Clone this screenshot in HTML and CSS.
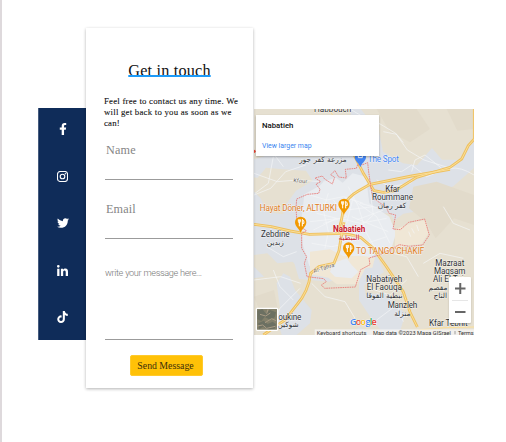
FILE: index.html
```html
<!DOCTYPE html>
<html lang="en">
<head>
<meta charset="utf-8">
<title>Get in touch</title>
<link rel="stylesheet" href="styles.css">
</head>
<body>
<main class="contact">
  <nav class="social">
    <a class="social-link" aria-label="Facebook"><svg width="8" height="12" viewBox="0 0 320 512"><path d="M279.14 288l14.22-92.66h-88.91v-60.13c0-25.35 12.42-50.06 52.24-50.06h40.42V6.26S260.43 0 225.36 0c-73.22 0-121.08 44.38-121.08 124.72v70.62H22.89V288h81.39v224h100.17V288z"/></svg></a>
    <a class="social-link" aria-label="Instagram"><svg width="11" height="11" viewBox="0 0 22 22"><rect class="outline" x="1" y="1" width="20" height="20" rx="5.5"/><circle class="outline" cx="11" cy="11" r="4.6"/><circle cx="16.7" cy="5.4" r="1.4"/></svg></a>
    <a class="social-link" aria-label="Twitter"><svg width="12" height="12" viewBox="0 0 512 512"><path d="M459.37 151.716c.325 4.548.325 9.097.325 13.645 0 138.72-105.583 298.558-298.558 298.558-59.452 0-114.68-17.219-161.137-47.106 8.447.974 16.568 1.299 25.34 1.299 49.055 0 94.213-16.568 130.274-44.832-46.132-.975-84.792-31.188-98.112-72.772 6.498.974 12.995 1.624 19.818 1.624 9.421 0 18.843-1.3 27.614-3.573-48.081-9.747-84.143-51.98-84.143-102.985v-1.299c13.969 7.797 30.214 12.67 47.431 13.319-28.264-18.843-46.781-51.005-46.781-87.391 0-19.492 5.197-37.36 14.294-52.954 51.655 63.675 129.3 105.258 216.365 109.807-1.624-7.797-2.599-15.918-2.599-24.04 0-57.828 46.782-104.934 104.934-104.934 30.213 0 57.502 12.67 76.67 33.137 23.715-4.548 46.456-13.32 66.599-25.34-7.798 24.366-24.366 44.833-46.132 57.827 21.117-2.273 41.584-8.122 60.426-16.243-14.292 20.791-32.161 39.308-52.628 54.253z"/></svg></a>
    <a class="social-link" aria-label="LinkedIn"><svg width="11" height="11" viewBox="0 0 448 448"><path d="M100.28 448H7.4V148.9h92.88zM53.79 108.1C24.09 108.1 0 83.5 0 53.8a53.79 53.79 0 0 1 107.58 0c0 29.7-24.1 54.3-53.79 54.3zM447.9 448h-92.68V302.4c0-34.7-.7-79.2-48.29-79.2-48.29 0-55.69 37.7-55.69 76.7V448h-92.78V148.9h89.08v40.8h1.3c12.4-23.5 42.69-48.3 87.88-48.3 94 0 111.28 61.9 111.28 142.3V448z"/></svg></a>
    <a class="social-link" aria-label="TikTok"><svg width="11" height="12" viewBox="0 0 448 512"><path d="M448,209.91a210.06,210.06,0,0,1-122.77-39.25V349.38A162.55,162.55,0,1,1,185,188.31V278.2a74.62,74.62,0,1,0,52.23,71.18V0l88,0a121.18,121.18,0,0,0,1.86,22.17h0A122.18,122.18,0,0,0,381,102.39a121.43,121.43,0,0,0,67,20.14Z"/></svg></a>
  </nav>

  <form class="card">
    <h1 class="title">Get in touch</h1>
    <p class="intro">Feel free to contact us any time. We<br>will get back to you as soon as we<br>can!</p>
    <div class="field">Name</div>
    <div class="field field-email">Email</div>
    <div class="field field-message">write your message here...</div>
    <button class="send" type="button">Send Message</button>
  </form>

  <section class="map">
    <svg class="map-canvas" width="220" height="226" viewBox="762 327 660 678">
      <defs>
        <g id="pin"><path d="M0 29C-3 17-17 10-17-3a17 17 0 0 1 34 0C17 10 3 17 0 29z"/><path class="cutlery" d="M-7-12v6q0 4 3 4t3-4v-6M-4-12V9M5 9V-12q6 3 5 12H5"/></g>
      </defs>
      <rect class="land" x="762" y="327" width="660" height="678"/>
      <path class="urban" d="M762 478l45-14 95 8 100-4 50-90v-51h30l55 68 12 60 60 35 42 6 45-52 30 35h55l15-35 26-20v80l-62 55-50 22-40 50-60 10-40 30-30 0-8 100 20 45-60 40 4 25 60 0 60 60-18 60 18 45 43 20-15 29h-35l-42-75-50-60-40-60 0-60-40-10-50 15-90-8-15-50-20-20-8-100-6-40 40-55 50-30-20-30-70-4-50-5-25 30-53-4z"/>
      <path class="urban" d="M762 575l20 20 20 40 60 10 45-15v180l-30-25-45 5-30-30-40 5zM830 850l20-30 20 10 15 40 50 60-5 40-40 35h-45l-15-50 10-30zM1040 1005l40-25 30 25zM762 835l30-5-30-30z"/>
      <path class="land" d="M1045 440l60-8 20 35-60 10zM1110 640l60 0 15 25-40 15z"/>
      <path class="shade" d="M1240 560l70-15 112 40v90l-60-20-55 60-30-50-50-40zM762 890l60-20 10 50-30 70zM1130 327h120l40 60-60 40-60-30zM1340 327h82v60l-50 5z"/>
      <path class="town" d="M968 545l40-12 20 15 30-28 40 10 10 80 60 40 20 50-15 50-45 10-25 20-40 15-95 28-5-20-35-5-20-65-5-60 10-90 45-25 20-20z"/>
      <path class="sand" d="M930 755l60-7 40 20 60 0 35 5-8 30-20 0-25 50-62 0-25-20-55-10zM1185 688l60-22 32-6 8 40-20 32-55 5-25 20z"/>
      <path class="town" d="M1000 790l40-15 15 20 20 20-20 20-50-5-15-15z"/>
      <path class="street" d="M762 520l70 25 60-5 70 5M762 585l50-20 45-50 60-20M820 470l-15 80-40 30M1137 370l50 30 35 50 50 30 80 25q30-5 70 20M1050 327l50 30 40 15M1150 395l40 8 20 25M1235 515l10-35 30-15 50 40M1165 510l40 5 30-20 45 35 30-12M1130 540l40 20 60-10 35-30M930 585l50 15 50-10 60 20M920 635l60-20 60 15 80-10M930 665l90-10 60 15 80-15M985 580l-15 50 15 65-10 50M1045 560l30 60 25 80 40 70M1060 600l70 50 40 80M1070 660l80-30M1060 590l-20 80M1110 570l10 75-50 45-30 55M935 730l60 10 50-10 60 15M1000 600l40 50-70 20M1080 610l60 15M1055 650l110 45M1100 730l60-20M950 640l60 15-70 35M762 840l80-10 60 20M900 865l-60 60-20 50M935 850l40 40 60 15 30 50M880 900l-40-40-20-50M1110 865l60 20 50-45M1130 960l60-45 20 50M1140 750l80 20 35 60M800 740l50 30 40-15M1270 790l50-30 70 15M850 500l-30-40 60-25M1330 620l30 50 50 20M1235 685l8 15M1250 675l6 18M1226 695l6 15"/>
      <g class="road-case"><path d="M762 673l52 7 57 13 57 10 80-2q40-1 75 12l35 30 40 55 52 78 20 60 22 45M1010 701q16-30 20-80 12-30 45-48l35-20 125-25 115-20"/><path d="M790 1005l65-45 35-45q35-40 42-95l25-20 45-10 15-38 8-50 7-35M1060 460l30 60 32 52 28 5 35-5 65-40 100-30 35-25 20-40 18-20v-90"/></g>
      <g class="road"><path d="M762 673l52 7 57 13 57 10 80-2q40-1 75 12l35 30 40 55 52 78 20 60 22 45M1010 701q16-30 20-80 12-30 45-48l35-20 125-25 115-20"/><path d="M790 1005l65-45 35-45q35-40 42-95l25-20 45-10 15-38 8-50 7-35M1060 460l30 60 32 52 28 5 35-5 65-40 100-30 35-25 20-40 18-20v-90M1255 990l80-7 87-2M985 327l14 20"/></g>
      <path class="boundary" d="M1088 494l15-6 3 28 7 48 6 30 40 28 8 18 20 5-8 42 22 2 25-22 48-10 14 48-20 30-40 4-30-5-38 20-25 12-28 8 3 20-28 15-16 52-92 4-10-10 15-10-8-9-50-6-8-40 7-20-15-25v-45l14-8-22-15-7-22-2-30 2-28 32-14 34-3 4-12-12-16 14-7-17-11 22-6 7 9 23 15 7-20-12-8 13-12 11 19 23 3-3-26 33-3 4-11z"/>
      <circle class="closure" cx="762" cy="454" r="5"/>
      <g class="pins"><use href="#pin" x="1032" y="616"/><use href="#pin" x="902" y="670"/><use href="#pin" x="1046" y="747"/></g>
      <g class="spot"><path d="M1081 502c-3-12-17-19-17-31a17 17 0 0 1 34 0c0 12-14 19-17 31z"/><path class="bag" d="M1075 465v8h12v-8"/></g>
      <g class="label">
        <text x="942" y="335" textLength="112">Habbouch</text>
        <text x="969" y="487" class="mid arabic">مزرعة كفر جور</text>
        <text x="1156" y="576" textLength="43">Kfar</text>
        <text x="1116" y="600" textLength="123">Roummane</text>
        <text x="1176" y="623" class="mid arabic">كفر رمان</text>
        <text x="783" y="712" textLength="86">Zebdine</text>
        <text x="826" y="736" class="mid arabic">زبدين</text>
        <text x="1306" y="799" textLength="87">Mazraat</text>
        <text x="1302" y="823" textLength="94">Maqsam</text>
        <text x="1299" y="847" textLength="92">Ali El Taj</text>
        <text x="1314" y="871" class="mid arabic">مقصم</text>
        <text x="1321" y="894" class="mid arabic">التاج</text>
        <text x="1099" y="847" textLength="108">Nabatiyeh</text>
        <text x="1100" y="870" textLength="106">El Faouqa</text>
        <text x="1153" y="893" class="mid arabic">نبطية الفوقا</text>
        <text x="1163" y="924" textLength="89">Manzleh</text>
        <text x="1207" y="947" class="mid arabic">منزلة</text>
        <text x="835" y="959" textLength="69">oukine</text>
        <text x="864" y="982" class="mid arabic">شوكين</text>
        <text x="1287" y="979" textLength="116">Kfar Tebnit</text>
      </g>
      <g class="label road-name"><text x="880" y="547" transform="rotate(4 880 547)">Kfour</text><text x="942" y="819" transform="rotate(-17 942 819)" textLength="65">Al-Tahra</text></g>
      <g class="label city"><text x="999" y="695" textLength="97">Nabatieh</text><text x="1047" y="719" class="mid arabic">النبطية</text></g>
      <g class="label food"><text x="779" y="632" textLength="232">Hayat Döner, ALTURKI</text><text x="1068" y="762" textLength="205">TO TANGO'CHAKIF</text></g>
      <g class="label place"><text x="1103" y="485" textLength="94">The Spot</text></g>
      <text class="google" x="1050" y="975" textLength="80"><tspan class="g-blue">G</tspan><tspan class="g-red">o</tspan><tspan class="g-yellow">o</tspan><tspan class="g-blue">g</tspan><tspan class="g-green">l</tspan><tspan class="g-red">e</tspan></text>
      <rect class="credits-bg" x="944" y="988" width="478" height="17"/>
      <g class="credits"><text x="950" y="1004" textLength="149">Keyboard shortcuts</text><text x="1119" y="1004" textLength="234">Map data ©2023 Mapa GISrael</text><text x="1374" y="1004" textLength="47">Terms</text><path d="M1365 993v10"/></g>
      <g class="satellite"><rect class="satellite-frame" x="769" y="925" width="64" height="66" rx="3"/><path class="sat-dark" d="M772 932l15-5 10 13 13-10 18 7-4 15-14 7-16-8-10 12-12-5zM775 970l16-8 12 10 15-7 10 8-4 13-20 2-15-8-12 8z"/><path class="sat-light" d="M780 943l17 5 14-9M795 968l20-12 13 6M772 978l16-3 12 10 26-6M804 928l-4 13"/></g>
    </svg>
    <div class="place-card"><strong class="place-name">Nabatieh</strong><a class="place-link">View larger map</a></div>
    <div class="zoom-control">
      <svg width="22" height="46" viewBox="0 0 22 46"><path class="divider" d="M3 23.500h16"/><path class="sign" d="M6 11.500h10.500M11.250 6v11M6 35h10.500"/></svg>
    </div>
  </section>
</main>
</body>
</html>
```
FILE: styles.css
```css
* { box-sizing: border-box; }
body {
  margin: 0;
  height: 442px;
  overflow: hidden;
  background: #fff;
  border-left: 2px solid #ded9dc;
  font-family: "Liberation Serif", serif;
}
.contact { display: flex; align-items: flex-start; padding: 28px 0 0 36px; }

.social {
  width: 48px;
  height: 232px;
  margin-top: 80px;
  padding-bottom: 2px;
  background: #0f2c59;
  border-left: 1px solid #455b7e;
  display: grid;
  grid-template-rows: repeat(5, 47px);
  align-content: center;
}
.social-link { display: flex; align-items: center; justify-content: center; }
.social-link svg { fill: #fff; }
.social-link .outline { fill: none; stroke: #fff; stroke-width: 2.2; }

.card {
  width: 167px;
  height: 360px;
  padding: 33px 18px 0;
  background: #fff;
  box-shadow: 0 1px 3px rgba(0, 0, 0, .3);
  display: flex;
  flex-direction: column;
  z-index: 1;
}
.title {
  align-self: center;
  height: 16px;
  margin: 0;
  border-bottom: 2px solid #1d9bf8;
  font-size: 16.2px;
  font-weight: 400;
  line-height: 20px;
  letter-spacing: .2px;
  white-space: nowrap;
  color: #111;
  clip-path: inset(0);
  overflow: hidden;
}
.intro {
  margin: 19px 0 0;
  font-size: 8.8px;
  line-height: 10.8px;
  letter-spacing: .22px;
  white-space: nowrap;
  color: #111;
  -webkit-text-stroke: .1px #111;
}
.field {
  width: 128px;
  height: 41px;
  margin: 11px 0 0 1px;
  padding: 3px 0 0 1px;
  border-bottom: 1px solid #9b9b9b;
  font-size: 12.2px;
  line-height: 16px;
  letter-spacing: .15px;
  color: #858585;
}
.field-email { margin-top: 18px; }
.field-message {
  height: 90px;
  padding: 16px 0 0;
  font: 300 9.2px/13px Roboto, sans-serif;
  letter-spacing: -.42px;
  word-spacing: .4px;
  color: #777;
}
.field-message { letter-spacing: -.38px; }
.send {
  width: 73px;
  height: 21px;
  margin: 15px 0 0 26px;
  padding: 0 2px 0 0;
  border: 1px solid #ffca2c;
  border-radius: 2px;
  background: #ffc107;
  color: #3c2f0b;
  font: 9.8px/18px "Liberation Serif", serif;
  white-space: nowrap;
}

.map { position: relative; width: 220px; height: 226px; margin: 81px 0 0 1px; }
.map-canvas { display: block; }
.land { fill: #e6e0d1; }
.shade { fill: #e2dbcb; }
.urban { fill: #dde1e7; }
.town { fill: #e9ecf0; }
.sand { fill: #f0e7d6; }
.street { fill: none; stroke: #f4f6f8; stroke-width: 2; }
.road-case { fill: none; stroke: #eec05f; stroke-width: 8.500; }
.road { fill: none; stroke: #fbdf98; stroke-width: 3; }
.boundary { fill: none; stroke: #e87672; stroke-width: 2.5; stroke-dasharray: 5 2; }
.closure { fill: #ea4335; }
.pins { fill: #f29900; }
.cutlery { fill: none; stroke: #fff; stroke-width: 3; }
.spot { fill: #4285f4; }
.bag { fill: none; stroke: #fff; stroke-width: 3; }
.label {
  font: 24.5px Roboto, sans-serif;
  fill: #303236;
  stroke: #fff;
  stroke-opacity: .65;
  stroke-width: 2.500px;
  paint-order: stroke;
}
.mid { text-anchor: middle; }
.arabic { font: 22px "DejaVu Sans", sans-serif; }
.road-name { font-size: 17px; fill: #64625c; }
.city { font-weight: 700; fill: #cb2030; }
.food { fill: #df7b23; }
.place { fill: #4285f4; }
.google { font: 600 27px "Open Sans", sans-serif; stroke: #fff; stroke-width: 2px; paint-order: stroke; }
.g-blue { fill: #4285f4; }
.g-red { fill: #ea4335; }
.g-yellow { fill: #fbbc05; }
.g-green { fill: #34a853; }
.credits-bg { fill: #f5f5f5; fill-opacity: .75; }
.credits { font: 17px Roboto, sans-serif; fill: #333; stroke: none; }
.credits path { stroke: #777; stroke-width: 2; }
.satellite-frame { fill: #83806b; stroke: #fff; stroke-width: 4; }
.sat-dark { fill: #6c7062; }
.sat-light { fill: none; stroke: #a99b84; stroke-width: 3; }

.place-card {
  position: absolute;
  left: 2px;
  top: 6px;
  width: 123px;
  height: 41px;
  padding: 5px 6px;
  display: flex;
  flex-direction: column;
  gap: 10px;
  background: #fff;
  box-shadow: 0 1px 2px rgba(0, 0, 0, .3);
  font-family: Roboto, sans-serif;
}
.place-name { font-size: 7.8px; line-height: 11px; font-weight: 500; color: #111; }
.place-link { font-size: 6.9px; line-height: 11px; color: #3b86f0; }
.zoom-control {
  position: absolute;
  right: 3px;
  top: 168px;
  width: 22px;
  height: 46px;
  background: #fff;
  border-radius: 1px;
  box-shadow: 0 1px 2px rgba(0, 0, 0, .2);
}
.zoom-control svg { display: block; }
.divider { stroke: #e6e6e6; }
.sign { stroke: #666; stroke-width: 2; }
```
